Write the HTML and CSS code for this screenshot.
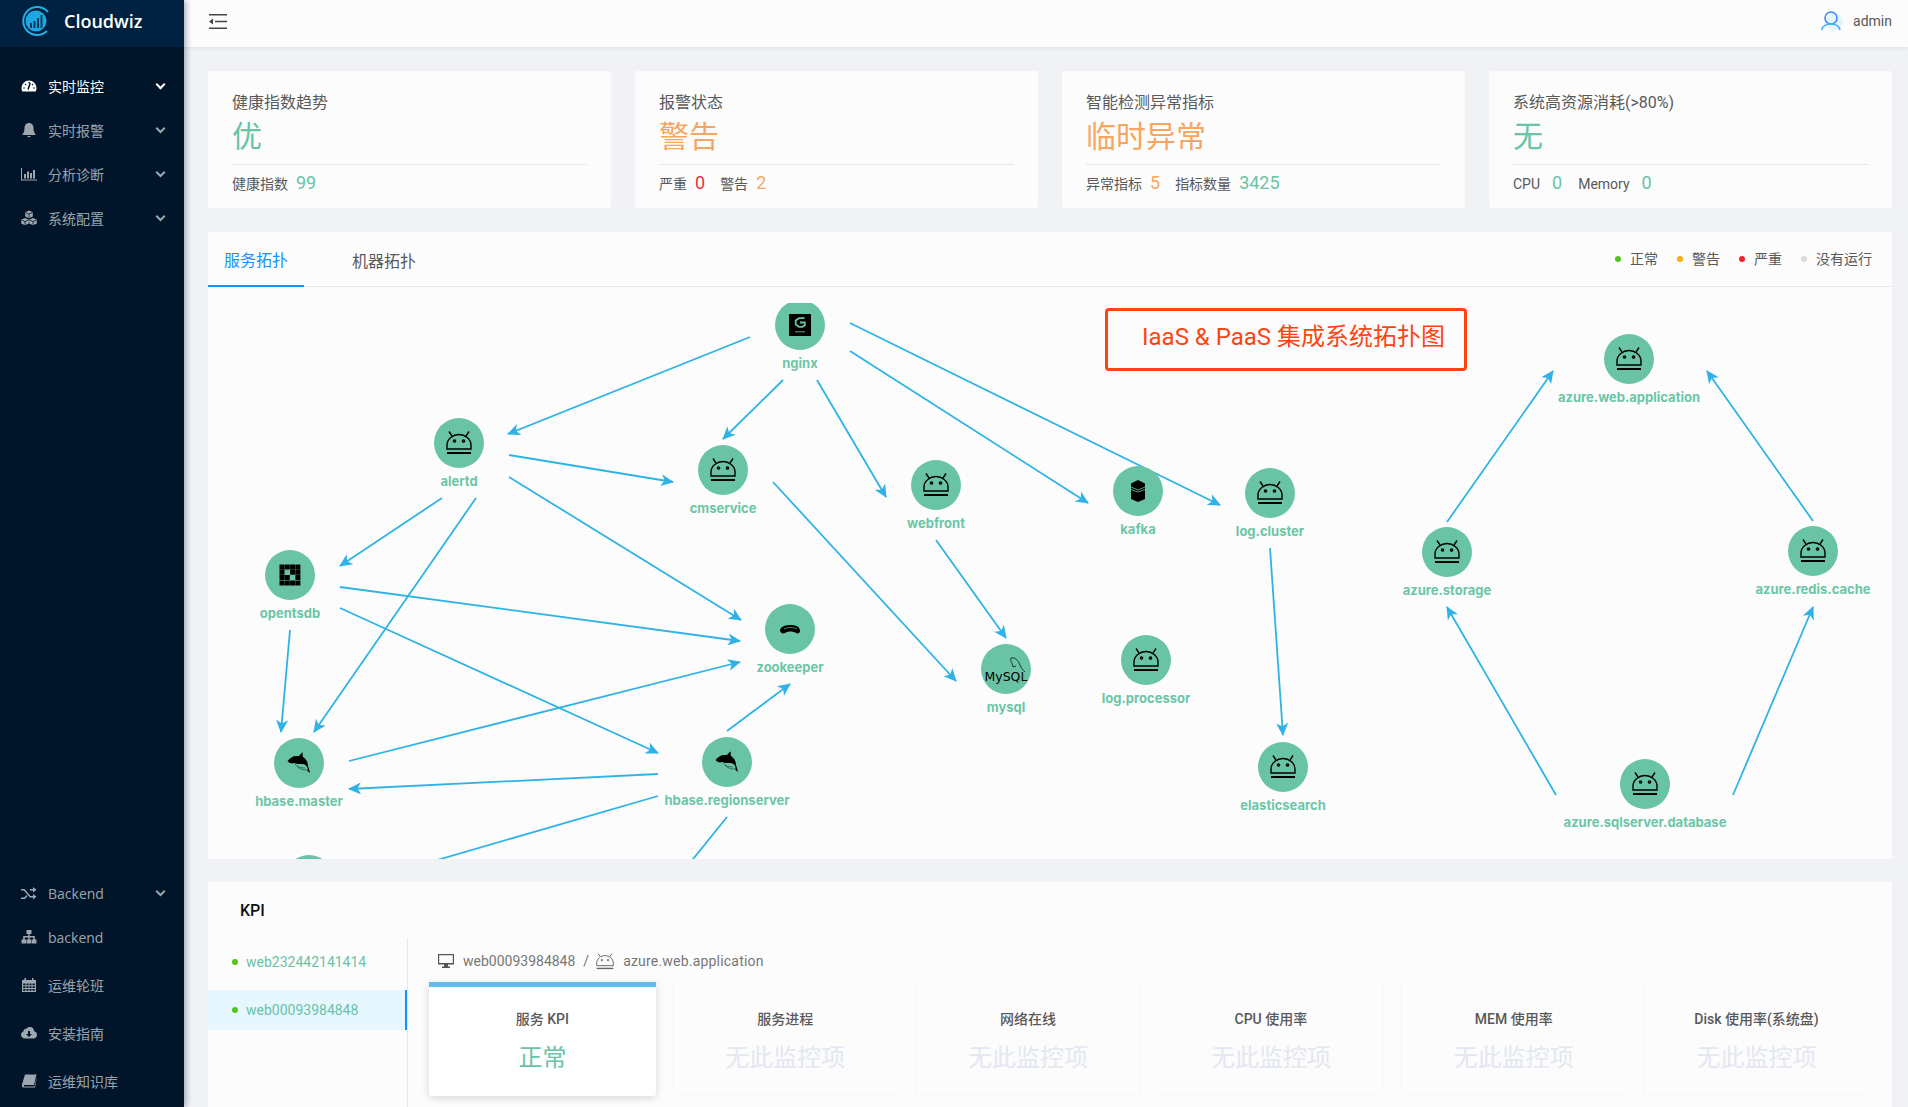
FILE: index.html
```html
<!DOCTYPE html>
<html lang="zh-CN">
<head>
    <meta charset="UTF-8">
    <title>Cloudwiz</title>
    <link rel="stylesheet" href="styles.css">
</head>
<body>

    <svg class="defs" width="0" height="0">
        <defs>
            <marker id="arrow" viewBox="0 0 14 12" refX="13" refY="6" markerWidth="14" markerHeight="12" markerUnits="userSpaceOnUse" orient="auto">
                <path d="M1 0 L14 6 L1 12 L4.5 6 Z" fill="#2fb3e6"/>
            </marker>
            <g id="ico-android" fill="none" stroke="currentColor" stroke-width="1.4">
                <path d="M-12 6 V2 C-12 -4 -6 -8.5 0 -8.5 C6 -8.5 12 -4 12 2 V6 Z"/>
                <path d="M-10 -11.5 L-7 -7 M10 -11.5 L7 -7"/>
                <circle cx="-4.5" cy="-2" r="1.1"/>
                <circle cx="4.5" cy="-2" r="1.1"/>
                <path d="M-12 10 H12" stroke-width="2"/>
            </g>
            <g id="ico-orca">
                <path fill="#000" d="M-11.5 -2 C-9 -5 -6 -7 -3 -7 L0 -7 C1 -8.5 2.5 -10 4 -10.5 C3.5 -9 3.5 -7.5 4 -6 C7 -4 9 -1 9 3 L10 6 L11 10 L8.5 8 L8.5 5 C7.5 2.5 6 1 3 1 C0 1 -3 1 -5 0 C-7 1 -10 0 -11.5 -2 Z"/>
                <path d="M-4 1 C-2 4 2 5 6 5 M-2 3 C0 6 4 7 8 7" fill="none" stroke="#1d3d33" stroke-width="0.6"/>
            </g>
        </defs>
    </svg>

    <div class="app">
        <aside class="sidebar">
            <div class="logo">
                <svg width="30" height="30" viewBox="0 0 30 30">
                    <circle cx="15" cy="15" r="10.5" fill="#1da7e0"/>
                    <path d="M9 22 V17 H11 V22 Z M12.5 22 V15 H14.5 V22 Z M16 22 V12 H18 V22 Z M19.5 22 V9 H21.5 V22 Z" fill="#0d3a5c"/>
                    <path d="M27 6 A14 14 0 1 0 26 25" fill="none" stroke="#22aee6" stroke-width="2"/>
                </svg>
                <span class="logo-name">Cloudwiz</span>
            </div>
            <nav class="menu">
                <a class="menu-item active">
                    <svg class="menu-ico" viewBox="0 0 16 16"><path d="M8 2.5 A7.5 7.5 0 0 0 .5 10 C.5 11.5 1 13 1.5 13.5 H14.5 C15 13 15.5 11.5 15.5 10 A7.5 7.5 0 0 0 8 2.5 Z"/><path d="M7.2 11 L9 5.5 M3 10 H3.1 M4.5 6.5 H4.6 M8 4.5 H8.1 M13 10 H13.1 M11.5 6.5 H11.6" stroke="#00152a" stroke-width="1.5" stroke-linecap="round" fill="none"/></svg>
                    <span>实时监控</span><i class="chev"></i>
                </a>
                <a class="menu-item">
                    <svg class="menu-ico" viewBox="0 0 16 16"><path d="M8 1 C5 1 3.5 3.5 3.5 6 C3.5 9.5 2.5 11 1.5 12 V13 H14.5 V12 C13.5 11 12.5 9.5 12.5 6 C12.5 3.5 11 1 8 1 Z M6.3 14 A1.8 1.8 0 0 0 9.7 14 Z"/></svg>
                    <span>实时报警</span><i class="chev"></i>
                </a>
                <a class="menu-item">
                    <svg class="menu-ico" viewBox="0 0 16 16"><path d="M0 2 H1 V13.5 H16 V14.5 H0 Z M3 8 H5 V12.5 H3 Z M6 5.5 H8 V12.5 H6 Z M9 7 H11 V12.5 H9 Z M12 4 H14 V12.5 H12 Z"/></svg>
                    <span>分析诊断</span><i class="chev"></i>
                </a>
                <a class="menu-item">
                    <svg class="menu-ico" viewBox="0 0 16 16"><path d="M8 .5 L11.8 2.2 V6.5 L8 8.2 L4.2 6.5 V2.2 Z M4 8 L7.8 9.7 V13.5 L4 15.3 L.2 13.5 V9.7 Z M12 8 L15.8 9.7 V13.5 L12 15.3 L8.2 13.5 V9.7 Z"/><path d="M4.6 2.6 L8 4.1 L11.4 2.6 M8 4.1 V7.6 M.6 10.1 L4 11.6 L7.4 10.1 M4 11.6 V14.8 M8.6 10.1 L12 11.6 L15.4 10.1 M12 11.6 V14.8" stroke="#00152a" stroke-width="0.8" fill="none"/></svg>
                    <span>系统配置</span><i class="chev"></i>
                </a>
            </nav>
            <nav class="menu menu-bottom">
                <a class="menu-item short">
                    <svg class="menu-ico" viewBox="0 0 16 16"><path d="M0 4 H3.5 L9.5 11 H12 V9 L15.5 11.8 L12 14.5 V12.6 H8.8 L2.8 5.6 H0 Z M0 12.6 H3.2 L5.4 10 L6.4 11.2 L4 14 H0 Z M8.8 5 L9.9 6.2 L9.5 5.6 H12 V7.6 L15.5 4.8 L12 2 V4 H9 Z"/></svg>
                    <span>Backend</span><i class="chev"></i>
                </a>
                <a class="menu-item tall">
                    <svg class="menu-ico" viewBox="0 0 16 16"><path d="M5.5 1 H10.5 V5 H8.7 V7 H13.8 V10.5 H15.5 V14.5 H10.5 V10.5 H12.3 V8.4 H8.7 V10.5 H10 V14.5 H6 V10.5 H7.3 V8.4 H3.7 V10.5 H5.5 V14.5 H.5 V10.5 H2.2 V7 H7.3 V5 H5.5 Z"/></svg>
                    <span>backend</span>
                </a>
                <a class="menu-item tall">
                    <svg class="menu-ico" viewBox="0 0 16 16"><path fill-rule="evenodd" d="M1 3 H3.5 V1 H5 V3 H11 V1 H12.5 V3 H15 V15 H1 Z M2.2 6.5 V8.3 H4.5 V6.5 Z M5.5 6.5 V8.3 H7.5 V6.5 Z M8.5 6.5 V8.3 H10.5 V6.5 Z M11.5 6.5 V8.3 H13.8 V6.5 Z M2.2 9.3 V11 H4.5 V9.3 Z M5.5 9.3 V11 H7.5 V9.3 Z M8.5 9.3 V11 H10.5 V9.3 Z M11.5 9.3 V11 H13.8 V9.3 Z M2.2 12 V13.8 H4.5 V12 Z M5.5 12 V13.8 H7.5 V12 Z M8.5 12 V13.8 H10.5 V12 Z M11.5 12 V13.8 H13.8 V12 Z"/></svg>
                    <span>运维轮班</span>
                </a>
                <a class="menu-item tall">
                    <svg class="menu-ico" viewBox="0 0 16 16"><path fill-rule="evenodd" d="M4 13.5 C1.5 13.5 0 11.8 0 9.8 C0 8.2 1 7 2.4 6.5 C2.5 4.5 4 3.5 5.4 3.8 C6.2 2.6 7.6 2 9 2 C11.5 2 13.2 4 13.2 6.3 C14.9 6.8 16 8.2 16 9.9 C16 12 14.4 13.5 12.4 13.5 Z M7 6 V9 H5 L8 12 L11 9 H9 V6 Z"/></svg>
                    <span>安装指南</span>
                </a>
                <a class="menu-item tall">
                    <svg class="menu-ico" viewBox="0 0 16 16"><path d="M4 1.5 H15.5 L13 12 H3.5 C2.5 12 2.5 13.5 3.5 13.5 H13.5 L15.5 5 V6.5 L14 14.5 H2.5 C1 14.5 .5 13 1 11.5 Z"/></svg>
                    <span>运维知识库</span>
                </a>
            </nav>
        </aside>

        <div class="main">
            <header class="topbar">
                <svg class="fold" width="18" height="15" viewBox="0 0 18 15"><path d="M0 0.8 H18 M6 7.5 H18 M0 14.2 H18" stroke="#444" stroke-width="1.6"/><path d="M0 7.5 L4 4.5 V10.5 Z" fill="#444"/></svg>
                <div class="user">
                    <svg width="24" height="24" viewBox="0 0 24 24">
                        <circle cx="14" cy="13" r="9" fill="#e6f4ff"/>
                        <circle cx="11" cy="9" r="6" fill="none" stroke="#3c8cff" stroke-width="1.6"/>
                        <path d="M1.5 21 C3 16 7 15 11 15 C15 15 19 16 20 21" fill="none" stroke="#3cb0f5" stroke-width="1.6"/>
                    </svg>
                    <span>admin</span>
                </div>
            </header>

            <section class="stats">
                <div class="stat">
                    <div class="stat-title">健康指数趋势</div>
                    <div class="stat-value green">优</div>
                    <div class="stat-foot">健康指数<b class="green">99</b></div>
                </div>
                <div class="stat">
                    <div class="stat-title">报警状态</div>
                    <div class="stat-value orange">警告</div>
                    <div class="stat-foot">严重<b class="red">0</b>警告<b class="orange">2</b></div>
                </div>
                <div class="stat">
                    <div class="stat-title">智能检测异常指标</div>
                    <div class="stat-value orange">临时异常</div>
                    <div class="stat-foot">异常指标<b class="orange">5</b>指标数量<b class="green">3425</b></div>
                </div>
                <div class="stat">
                    <div class="stat-title">系统高资源消耗(&gt;80%)</div>
                    <div class="stat-value green">无</div>
                    <div class="stat-foot latin">CPU<b class="green">0</b>Memory<b class="green">0</b></div>
                </div>
            </section>

            <section class="topo">
                <div class="tabs">
                    <a class="tab current">服务拓扑</a>
                    <a class="tab">机器拓扑</a>
                    <ul class="legend">
                        <li><i class="dot bg-green"></i>正常</li>
                        <li><i class="dot bg-orange"></i>警告</li>
                        <li><i class="dot bg-red"></i>严重</li>
                        <li><i class="dot bg-grey"></i>没有运行</li>
                    </ul>
                </div>
                <div class="canvas">
                    <!-- viewBox is page coordinates shifted by the canvas origin -->
                    <svg class="graph" width="1684" height="556" viewBox="208 303 1684 556">
                        <g class="edges">
                            <line x1="750" y1="337" x2="508" y2="434"/>
                            <line x1="783" y1="380" x2="723" y2="439"/>
                            <line x1="817" y1="380" x2="886" y2="497"/>
                            <line x1="850" y1="351" x2="1088" y2="503"/>
                            <line x1="850" y1="323" x2="1220" y2="505"/>
                            <line x1="509" y1="455" x2="673" y2="482"/>
                            <line x1="509" y1="477" x2="741" y2="620"/>
                            <line x1="442" y1="498" x2="340" y2="566"/>
                            <line x1="476" y1="498" x2="314" y2="732"/>
                            <line x1="340" y1="587" x2="740" y2="641"/>
                            <line x1="340" y1="608" x2="658" y2="753"/>
                            <line x1="290" y1="630" x2="281" y2="732"/>
                            <line x1="349" y1="761" x2="740" y2="662"/>
                            <line x1="658" y1="774" x2="349" y2="789"/>
                            <line x1="727" y1="731" x2="790" y2="684"/>
                            <line x1="658" y1="796" x2="358" y2="883"/>
                            <line x1="727" y1="817" x2="660" y2="900"/>
                            <line x1="773" y1="482" x2="956" y2="681"/>
                            <line x1="936" y1="540" x2="1006" y2="638"/>
                            <line x1="1270" y1="548" x2="1283" y2="735"/>
                            <line x1="1447" y1="522" x2="1553" y2="371"/>
                            <line x1="1813" y1="521" x2="1707" y2="371"/>
                            <line x1="1556" y1="795" x2="1447" y2="607"/>
                            <line x1="1733" y1="795" x2="1813" y2="607"/>
                        </g>

                        <g class="node" transform="translate(800 325)">
                            <circle r="25"/>
                            <rect x="-11" y="-11" width="22" height="22" fill="#000"/>
                            <path d="M4.5 -6.8 H-1 L-4.3 -4.5 V-0.5 L-1 1.8 H2.5 L4.8 0.2 V-2.5 H0" fill="none" stroke="#69c3a5" stroke-width="1.8"/>
                            <rect x="-5" y="6" width="10" height="1.5" fill="#3a7060"/>
                            <text y="39">nginx</text>
                        </g>
                        <g class="node" transform="translate(459 443)"><circle r="25"/><use href="#ico-android"/><text y="39">alertd</text></g>
                        <g class="node" transform="translate(723 470)"><circle r="25"/><use href="#ico-android"/><text y="39">cmservice</text></g>
                        <g class="node" transform="translate(936 485)"><circle r="25"/><use href="#ico-android"/><text y="39">webfront</text></g>
                        <g class="node" transform="translate(1138 491)">
                            <circle r="25"/>
                            <path d="M0 -11 L7 -7.5 V8 L0 11 L-7 8 V-7.5 Z" fill="#000"/>
                            <path d="M-7 -4 L0 -1 L7 -4 M-7 -1.5 L0 1 L7 -1.5" fill="none" stroke="#69c3a5" stroke-width="0.8"/>
                            <text y="39">kafka</text>
                        </g>
                        <g class="node" transform="translate(1270 493)"><circle r="25"/><use href="#ico-android"/><text y="39">log.cluster</text></g>
                        <g class="node" transform="translate(290 575)">
                            <circle r="25"/>
                            <path d="M-10.5 -10.5 h5 v5 h-5 Z M-5.2 -10.5 h5 v5 h-5 Z M.1 -10.5 h5 v5 h-5 Z M5.4 -10.5 h5 v5 h-5 Z M-10.5 -5.2 h5 v5 h-5 Z M.1 -5.2 h5 v5 h-5 Z M5.4 -5.2 h5 v5 h-5 Z M-10.5 .1 h5 v5 h-5 Z M-5.2 .1 h5 v5 h-5 Z M5.4 .1 h5 v5 h-5 Z M-10.5 5.4 h5 v5 h-5 Z M-5.2 5.4 h5 v5 h-5 Z M.1 5.4 h5 v5 h-5 Z M5.4 5.4 h5 v5 h-5 Z" fill="#000"/>
                            <text y="39">opentsdb</text>
                        </g>
                        <g class="node" transform="translate(790 629)">
                            <circle r="25"/>
                            <path d="M-10 1 C-9 -3 -4 -4 1 -4 C6 -4 10 -2 10 2 C10 4 8 5 6 4 C3 2 -2 2 -5 4 C-7 5 -10 4 -10 1 Z" fill="#000"/>
                            <path d="M-6 0 C-2 -2 3 -2 7 0" fill="none" stroke="#69c3a5" stroke-width="0.7"/>
                            <text y="39">zookeeper</text>
                        </g>
                        <g class="node" transform="translate(1006 669)">
                            <circle r="25"/>
                            <text class="mysql" x="-21.5" y="8">MySQL</text>
                            <path d="M5 -11 C9 -12 12 -9 14 -4 C15 -1 17 1 19 3 M5 -11 C4 -8 6 -7 7 -2 L10 -3" fill="none" stroke="#000" stroke-width="0.7"/>
                            <text y="39">mysql</text>
                        </g>
                        <g class="node" transform="translate(1146 660)"><circle r="25"/><use href="#ico-android"/><text y="39">log.processor</text></g>
                        <g class="node" transform="translate(299 763)"><circle r="25"/><use href="#ico-orca"/><text y="39">hbase.master</text></g>
                        <g class="node" transform="translate(727 762)"><circle r="25"/><use href="#ico-orca"/><text y="39">hbase.regionserver</text></g>
                        <g class="node" transform="translate(1283 767)"><circle r="25"/><use href="#ico-android"/><text y="39">elasticsearch</text></g>
                        <g class="node" transform="translate(1629 359)"><circle r="25"/><use href="#ico-android"/><text y="39">azure.web.application</text></g>
                        <g class="node" transform="translate(1447 552)"><circle r="25"/><use href="#ico-android"/><text y="39">azure.storage</text></g>
                        <g class="node" transform="translate(1813 551)"><circle r="25"/><use href="#ico-android"/><text y="39">azure.redis.cache</text></g>
                        <g class="node" transform="translate(1645 784)"><circle r="25"/><use href="#ico-android"/><text y="39">azure.sqlserver.database</text></g>
                        <g class="node" transform="translate(309 880)"><circle r="25"/></g>
                    </svg>
                    <div class="note">IaaS &amp; PaaS 集成系统拓扑图</div>
                </div>
            </section>

            <section class="kpi">
                <h3 class="kpi-head">KPI</h3>
                <div class="kpi-body">
                    <ul class="hosts">
                        <li><i class="dot bg-green"></i>web232442141414</li>
                        <li class="selected"><i class="dot bg-green"></i>web00093984848</li>
                    </ul>
                    <div class="kpi-right">
                        <div class="crumb">
                            <svg width="16" height="14" viewBox="0 0 16 14"><path fill-rule="evenodd" d="M0 0 H16 V10.5 H10 V12.5 H12 V14 H4 V12.5 H6 V10.5 H0 Z M1.2 1.2 V9 H14.8 V1.2 Z" fill="#555"/></svg>
                            <span class="crumb-host">web00093984848</span>
                            <span class="sep">/</span>
                            <svg class="crumb-android" width="18" height="17" viewBox="-13 -12 26 24"><use href="#ico-android"/></svg>
                            <span class="crumb-name">azure.web.application</span>
                        </div>
                        <div class="kpi-cards">
                            <div class="kpi-card on"><div class="kpi-name">服务 KPI</div><div class="kpi-val">正常</div></div>
                            <div class="kpi-card"><div class="kpi-name">服务进程</div><div class="kpi-val">无此监控项</div></div>
                            <div class="kpi-card"><div class="kpi-name">网络在线</div><div class="kpi-val">无此监控项</div></div>
                            <div class="kpi-card"><div class="kpi-name">CPU 使用率</div><div class="kpi-val">无此监控项</div></div>
                            <div class="kpi-card"><div class="kpi-name">MEM 使用率</div><div class="kpi-val">无此监控项</div></div>
                            <div class="kpi-card"><div class="kpi-name">Disk 使用率(系统盘)</div><div class="kpi-val">无此监控项</div></div>
                        </div>
                    </div>
                </div>
            </section>
        </div>
    </div>

</body>
</html>
```

FILE: styles.css
```css
* {
    box-sizing: border-box;
}

html, body {
    margin: 0;
    height: 100%;
    overflow: hidden;
}

body {
    background-color: #f0f2f6;
    color: #595959;
    font-family: Roboto, "Noto Sans CJK SC", sans-serif;
    font-size: 14px;
}

ul {
    list-style: none;
    margin: 0;
    padding: 0;
}

.defs {
    position: absolute;
}

.app {
    display: flex;
    height: 1107px;
}

/* sidebar */
.sidebar {
    width: 184px;
    flex-shrink: 0;
    display: flex;
    flex-direction: column;
    background-color: #00152a;
    box-shadow: 2px 0 6px rgba(0, 21, 41, 0.35);
    font-family: "Open Sans", "Noto Sans CJK SC", sans-serif;
    position: relative;
    z-index: 2;
}

.logo {
    height: 47px;
    display: flex;
    align-items: center;
    padding: 0 0 6px 21px;
    background-color: #002140;
}

.logo-name {
    margin-left: 13px;
    color: #fff;
    font-size: 18px;
    font-weight: 600;
}

.menu {
    padding-top: 17px;
}

.menu-bottom {
    margin-top: auto;
    padding: 0 0 2px;
}

.menu-item {
    height: 44px;
    display: flex;
    align-items: center;
    padding: 0 18px 0 21px;
    color: rgba(255, 255, 255, 0.62);
}

.menu-item.short {
    height: 40px;
}

.menu-item.tall {
    height: 48px;
}

.menu-item span {
    margin-left: 11px;
}

.menu-item.active {
    color: #fff;
}

.menu-ico {
    width: 16px;
    height: 16px;
    flex-shrink: 0;
    fill: currentColor;
}

.chev {
    margin-left: auto;
    width: 7px;
    height: 7px;
    margin-right: 2px;
    margin-top: -4px;
    border-right: 2px solid currentColor;
    border-bottom: 2px solid currentColor;
    transform: rotate(45deg);
}

/* main column */
.main {
    flex: 1;
    min-width: 0;
    display: flex;
    flex-direction: column;
}

.topbar {
    height: 47px;
    flex-shrink: 0;
    display: flex;
    align-items: center;
    justify-content: space-between;
    padding: 0 16px 5px 25px;
    background-color: #fcfcfd;
    box-shadow: 0 1px 4px rgba(0, 21, 41, 0.08);
}

.user {
    display: flex;
    align-items: center;
    font-size: 14px;
    color: #595959;
}

.user span {
    margin-left: 9px;
}

.stats {
    display: flex;
    gap: 24px;
    padding: 24px 16px 24px 24px;
}

.stat {
    flex: 1;
    height: 137px;
    padding: 21px 24px 0;
    background-color: #fcfcfd;
    border-radius: 2px;
}

.stat-title {
    font-size: 16px;
    line-height: 22px;
}

.stat-value {
    font-size: 30px;
    line-height: 38px;
    margin-top: 4px;
    padding-bottom: 8px;
    border-bottom: 1px solid #e4e6ec;
}

.stat-foot {
    margin-top: 6px;
    line-height: 24px;
}

.stat-foot b {
    font-size: 18px;
    font-weight: 400;
    margin: 0 15px 0 8px;
}

.stat-foot.latin b {
    margin: 0 16px 0 12px;
}

.green { color: #69c3a5; }
.orange { color: #f6a661; }
.red { color: #e8323f; }

.bg-green { background-color: #52c41a; }
.bg-orange { background-color: #faad14; }
.bg-red { background-color: #f5222d; }
.bg-grey { background-color: #d9d9d9; }

.dot {
    display: inline-block;
    width: 6px;
    height: 6px;
    border-radius: 50%;
}

/* topology */
.topo {
    margin: 0 16px 0 24px;
    height: 627px;
    flex-shrink: 0;
    display: flex;
    flex-direction: column;
    background-color: #fcfcfd;
}

.tabs {
    height: 55px;
    flex-shrink: 0;
    display: flex;
    align-items: stretch;
    border-bottom: 1px solid #e8e8e8;
}

.tab {
    width: 96px;
    display: flex;
    align-items: center;
    justify-content: center;
    font-size: 16px;
    margin-right: 32px;
    margin-bottom: -1px;
}

.tab.current {
    color: #1890ff;
    border-bottom: 2px solid #1890ff;
}

.legend {
    margin-left: auto;
    margin-right: 20px;
    margin-top: -2px;
    display: flex;
    align-items: center;
    gap: 19px;
}

.legend .dot {
    margin-right: 9px;
    vertical-align: 2px;
}

.canvas {
    flex: 1;
    position: relative;
    overflow: hidden;
    padding-top: 16px;
}

.graph {
    display: block;
}

.edges line {
    stroke: #2fb3e6;
    stroke-width: 1.8;
    marker-end: url(#arrow);
}

.node {
    color: #000;
}

.node circle {
    fill: #69c3a5;
}

.node text {
    fill: #6cc6a6;
    font-family: Inter, sans-serif;
    font-size: 13px;
    font-weight: 700;
    text-anchor: middle;
    dominant-baseline: middle;
}

.node .mysql {
    fill: #000;
    font-size: 12.5px;
    font-weight: 400;
    text-anchor: start;
    font-family: "DejaVu Sans", sans-serif;
}

.note {
    position: absolute;
    left: 897px;
    top: 21px;
    width: 362px;
    height: 63px;
    display: flex;
    align-items: center;
    padding: 0 0 10px 34px;
    border: 3px solid #ff4411;
    border-radius: 4px;
    color: #ff4411;
    font-size: 24px;
}

/* kpi */
.kpi {
    margin: 23px 16px 0 24px;
    flex: 1;
    min-height: 0;
    display: flex;
    flex-direction: column;
    background-color: #fcfcfd;
}

.kpi-head {
    margin: 0;
    padding: 18px 0 0 32px;
    height: 56px;
    font-size: 16px;
    font-weight: 500;
    line-height: 22px;
    color: #111;
}

.kpi-body {
    flex: 1;
    display: flex;
    min-height: 0;
}

.hosts {
    width: 200px;
    flex-shrink: 0;
    border-right: 1px solid #e4e6ec;
    color: #69c3a5;
    padding-top: 4px;
}

.hosts li {
    height: 40px;
    margin-bottom: 8px;
    display: flex;
    align-items: center;
    padding-left: 24px;
}

.hosts .dot {
    margin-right: 8px;
}

.hosts .selected {
    background-color: #e6f7ff;
    border-right: 2px solid #1890ff;
}

.kpi-right {
    flex: 1;
    min-width: 0;
    padding: 0 22px 0 21px;
}

.crumb {
    height: 44px;
    padding: 2px 0 0 9px;
    display: flex;
    align-items: center;
    color: #777;
}

.crumb-host {
    margin-left: 9px;
}

.crumb .sep {
    margin: 0 7px 0 8px;
}

.crumb-android {
    color: #666;
}

.crumb-name {
    margin-left: 9px;
    letter-spacing: 0.2px;
}

.kpi-cards {
    display: flex;
    gap: 16px;
}

.kpi-card {
    width: 227px;
    height: 114px;
    padding-top: 25px;
    text-align: center;
    border: 1px solid #f8f8fa;
    border-radius: 3px;
}

.kpi-card.on {
    background-color: #fff;
    border: 0;
    border-top: 5px solid #5cbdf0;
    border-radius: 0 0 3px 3px;
    box-shadow: 0 2px 8px rgba(0, 0, 0, 0.15);
    padding-top: 21px;
}

.kpi-name {
    font-size: 14px;
    line-height: 22px;
    font-weight: 500;
}

.kpi-val {
    margin-top: 12px;
    font-size: 24px;
    line-height: 32px;
    color: #e3e7f0;
}

.kpi-card.on .kpi-val {
    color: #69c3a5;
}
```
